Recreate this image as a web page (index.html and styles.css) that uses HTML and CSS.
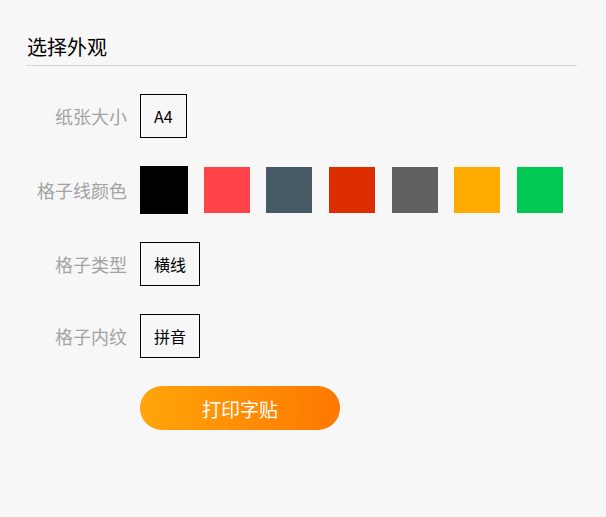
FILE: index.html
```html
<!DOCTYPE html>
<html>
<head>
  <title>选择外观</title>
  <link rel="stylesheet" href="styles.css">
</head>
<body>
  <div class="panel">
    <h3 class="title">选择外观</h3>

    <div class="row">
      <span class="label">纸张大小</span>
      <div class="options">
        <span class="opt active">A4</span>
      </div>
    </div>

    <div class="row">
      <span class="label">格子线颜色</span>
      <div class="swatches">
        <span class="swatch active" style="background:#000000"></span>
        <span class="swatch" style="background:#ff4347"></span>
        <span class="swatch" style="background:#455a64"></span>
        <span class="swatch" style="background:#dd2c00"></span>
        <span class="swatch" style="background:#616161"></span>
        <span class="swatch" style="background:#ffab00"></span>
        <span class="swatch" style="background:#00c853"></span>
      </div>
    </div>

    <div class="row">
      <span class="label">格子类型</span>
      <div class="options">
        <span class="opt active">横线</span>
      </div>
    </div>

    <div class="row">
      <span class="label">格子内纹</span>
      <div class="options">
        <span class="opt active">拼音</span>
      </div>
    </div>

    <div class="row">
      <span class="label"></span>
      <button class="print">打印字贴</button>
    </div>
  </div>
</body>
</html>
```

FILE: styles.css
```css
body {
  margin: 0;
  background-color: #f7f7f7;
  font-family: "Noto Sans CJK SC", "Noto Sans", sans-serif;
}

.panel {
  padding: 29px 29px 0 26px;
}

.title {
  margin: 0;
  padding: 0 0 0 1px;
  height: 36px;
  line-height: 36px;
  font-size: 20px;
  font-weight: normal;
  color: #000;
  border-bottom: 1px solid #d6d6d6;
  margin-bottom: 28px;
}

.row {
  display: flex;
  align-items: center;
  margin-bottom: 28px;
}

.label {
  width: 101px;
  margin-right: 13px;
  text-align: right;
  font-size: 18px;
  color: #a3a3a3;
  white-space: nowrap;
}

.options {
  display: flex;
  gap: 12px;
}

.opt {
  box-sizing: border-box;
  height: 44px;
  line-height: 42px;
  padding: 0 13px;
  border: 1px solid transparent;
  font-size: 16px;
  color: #000;
  cursor: pointer;
}

.opt.active {
  border-color: #000;
}

.swatches {
  display: flex;
  gap: 14.7px;
}

.swatch {
  box-sizing: border-box;
  width: 48px;
  height: 48px;
  border: 1px solid #f7f7f7;
  cursor: pointer;
}

.swatch.active {
  border-color: #000;
}

.print {
  width: 200px;
  height: 44px;
  border: none;
  border-radius: 22px;
  background: linear-gradient(to right, #ffa50a, #ff7800);
  color: #fff;
  font-family: inherit;
  font-size: 19px;
  cursor: pointer;
}
```
